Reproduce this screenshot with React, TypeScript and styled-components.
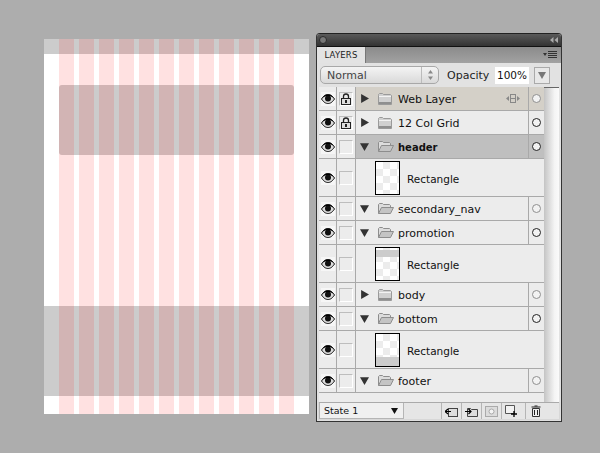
import React from 'react';
import styled, { createGlobalStyle } from 'styled-components';

const GlobalStyle = createGlobalStyle`
  html, body { margin:0; padding:0; background:#adadad; }
  * { box-sizing:border-box; }
`;

const Page = styled.div`
  width:600px;
  height:453px;
  overflow:hidden;
  background:#adadad;
  display:flex;
  align-items:flex-start;
  padding:33px 0 0 44px;
  gap:7px;
  font-family:"DejaVu Sans", "Liberation Sans", sans-serif;
`;

/* left: the document with its grid */
const Canvas = styled.div`
  position:relative;
  width:265px;
  height:375px;
  margin-top:6px;
  background:#fff;
  display:flex;
  flex-direction:column;
`;
const TopBand = styled.div`
  height:15px;
  background:#ccc;
`;
const Promo = styled.div`
  height:70px;
  margin:31px 15px 0;
  background:#ccc;
  border-radius:3px;
`;
const BottomBand = styled.div`
  height:90px;
  margin-top:151px;
  background:#ccc;
`;
const GridOverlay = styled.div`
  position:absolute;
  top:0;
  bottom:0;
  left:15px;
  right:15px;
  display:grid;
  grid-template-columns:repeat(12, 15px);
  column-gap:5px;
`;
const GridCol = styled.div`
  background:rgba(255,0,0,.118);
`;

/* right: layers panel */
const Panel = styled.div`
  width:246px;
  height:389px;
  background:#d8d8d8;
  border:1px solid #333;
  border-top-color:#222;
  border-radius:4px 4px 0 0;
  display:flex;
  flex-direction:column;
  box-shadow:inset 0 0 0 1px #e0e0e0;
`;
const TitleBar = styled.div`
  height:12px;
  flex:none;
  display:flex;
  align-items:center;
  justify-content:space-between;
  padding:0 3px 0 2px;
  background:linear-gradient(#5a5a5a, #333);
  border-radius:3px 3px 0 0;
`;
const CloseDot = styled.span`
  width:8px;
  height:8px;
  border-radius:50%;
  background:#777;
  border:1px solid #2a2a2a;
`;
const TabBar = styled.div`
  height:17px;
  flex:none;
  display:flex;
  align-items:stretch;
  justify-content:space-between;
  background:linear-gradient(#8b8b8b, #a2a2a2);
  border-top:1px solid #111;
  padding-right:4px;
`;
const Tab = styled.div`
  width:49px;
  background:#e3e3e3;
  border-right:1px solid #777;
  font-size:8.5px;
  color:#1c1c1c;
  display:flex;
  align-items:center;
  justify-content:center;
  letter-spacing:.2px;
`;
const MenuButton = styled.div`
  display:flex;
  align-items:center;
`;
const Controls = styled.div`
  height:24px;
  flex:none;
  display:flex;
  align-items:center;
  padding:0 11px 0 3px;
  background:#e2e2e2;
  font-size:11px;
  color:#222;
`;
const BlendSelect = styled.div`
  width:119px;
  height:18px;
  border:1px solid #a8a8a8;
  border-radius:5px;
  background:linear-gradient(#f4f4f4, #d9d9d9);
  display:flex;
  align-items:center;
  justify-content:space-between;
  padding-left:6px;
  color:#444;
`;
const Stepper = styled.span`
  width:17px;
  height:100%;
  border-left:1px solid #bbb;
  display:flex;
  align-items:center;
  justify-content:center;
`;
const OpacityLabel = styled.span`
  margin-left:8px;
  width:48px;
`;
const OpacityValue = styled.span`
  width:34px;
  height:17px;
  background:#fff;
  color:#111;
  font-size:10.5px;
  display:flex;
  align-items:center;
  justify-content:center;
`;
const OpacityArrow = styled.span`
  width:16px;
  height:17px;
  margin-left:5px;
  border:1px solid #aaa;
  background:#e8e8e8;
  display:flex;
  align-items:center;
  justify-content:center;
`;
const ListArea = styled.div`
  height:315px;
  flex:none;
  display:flex;
  padding-left:2px;
  background:#e2e2e2;
`;
const LayerList = styled.div`
  width:225px;
  flex:none;
  background:#ececec;
  display:flex;
  flex-direction:column;
`;
const Scrollbar = styled.div`
  flex:1;
  margin-right:2px;
  border-top:1px solid #666;
  background:linear-gradient(90deg, #c4c4c4, #f4f4f4 70%, #fafafa);
`;

const toneBg = { active: '#d4d0c8', selected: '#bfbfbf', normal: '#ececec' };

const Row = styled.div<{ $tone: keyof typeof toneBg; $tall?: boolean }>`
  height:${({ $tall }) => ($tall ? 38 : 24)}px;
  flex:none;
  display:flex;
  align-items:stretch;
  background:${({ $tone }) => toneBg[$tone]};
  border-bottom:1px solid #a9a9a9;
`;
const EyeCell = styled.div`
  width:18px;
  flex:none;
  display:flex;
  align-items:center;
  justify-content:center;
  background:#ececec;
  border-right:1px solid #a9a9a9;
`;
const LockCell = styled(EyeCell)`
  width:19px;
`;
const LockBox = styled.span`
  width:14px;
  height:14px;
  border:1px solid #bdbdbd;
  border-right-color:#fff;
  border-bottom-color:#fff;
  background:#ececec;
  display:flex;
  align-items:center;
  justify-content:center;
`;
const EyeBox = styled.span`
  width:14px;
  height:14px;
  background:#f6f6f6;
  display:flex;
  align-items:center;
  justify-content:center;
`;
const LayerBody = styled.div<{ $indent?: boolean }>`
  flex:1;
  min-width:0;
  display:flex;
  align-items:center;
  padding-left:${({ $indent }) => ($indent ? 19 : 0)}px;
`;
const Twist = styled.span`
  width:16px;
  flex:none;
  display:flex;
  align-items:center;
  justify-content:center;
`;
const FolderSlot = styled.span`
  width:16px;
  margin-left:6px;
  margin-right:4px;
  flex:none;
  display:flex;
`;
const LayerName = styled.span<{ $bold?: boolean }>`
  font-size:${({ $bold }) => ($bold ? 10 : 11)}px;
  padding-top:2px;
  color:#111;
  font-weight:${({ $bold }) => ($bold ? 700 : 400)};
  white-space:nowrap;
`;
const ThumbName = styled.span`
  font-size:10.5px;
  padding-top:2px;
  color:#111;
  margin-left:7px;
`;
const Thumb = styled.div<{ $band?: 'top' | 'bottom' }>`
  position:relative;
  width:25px;
  height:34px;
  flex:none;
  border:1px solid #000;
  background:repeating-conic-gradient(#ececec 0 25%, #fff 0 50%) 0 0 / 14px 14px;
  &::after {
    content:${({ $band }) => ($band ? '""' : 'none')};
    position:absolute;
    left:0;
    right:0;
    ${({ $band }) => ($band === 'top' ? 'top:2px;height:7px;' : 'bottom:0;height:9px;')}
    background:#ccc;
  }
`;
const LinkSlot = styled.span`
  margin-left:auto;
  margin-right:8px;
  display:flex;
`;
const TargetCell = styled.div`
  width:16px;
  flex:none;
  border-left:1px solid #a9a9a9;
  display:flex;
  align-items:center;
  justify-content:center;
`;
const Target = styled.span<{ $on?: boolean }>`
  width:9px;
  height:9px;
  border-radius:50%;
  background:#f2f2f2;
  border:1px solid ${({ $on }) => ($on ? '#222' : '#8f8f8f')};
`;
const StatusBar = styled.div`
  height:17px;
  flex:none;
  display:flex;
  align-items:stretch;
  margin-left:2px;
  margin-right:2px;
  border-top:1px solid #aaa;
  background:#e6e6e6;
  font-size:9.5px;
  color:#111;
`;
const StateSelect = styled.div`
  width:85px;
  display:flex;
  align-items:center;
  justify-content:space-between;
  padding:0 5px 0 4px;
  background:#f0f0f0;
  border:1px solid #b5b5b5;
  border-top:none;
`;
const StatusIcon = styled.span<{ $first?: boolean; $gap?: boolean }>`
  width:20px;
  margin-left:${({ $first, $gap }) => ($first ? 37 : $gap ? 4 : 0)}px;
  border-left:1px solid #b5b5b5;
  display:flex;
  align-items:center;
  justify-content:center;
`;

const Tri = ({ dir, color = '#333', size = 9 }: { dir: 'right' | 'down' | 'up'; color?: string; size?: number }) => {
  const pts = dir === 'right' ? '1,0 8,4 1,8' : dir === 'down' ? '0,1 8,1 4,8' : '0,7 8,7 4,0';
  return (
    <svg width={size} height={size} viewBox="0 0 8 8"><polygon points={pts} fill={color} /></svg>
  );
};

const Eye = () => (
  <svg width="14" height="10" viewBox="0 0 14 10">
    <path d="M.5 5C3 1.2 5 .5 7 .5s4 .7 6.5 4.5C11 8.700 9 9.500 7 9.500S3 8.700.5 5z" fill="#ddd" stroke="#111" strokeWidth="1" />
    <circle cx="7" cy="4.500" r="3" fill="#111" />
    <path d="M1 4.500C3 1 5 .6 7 .6s4 .4 6 3.900C11 2.600 9 2 7 2S3 2.600 1 4.500z" fill="#000" />
  </svg>
);

const Lock = () => (
  <svg width="10" height="12" viewBox="0 0 10 12">
    <path d="M2.500 5.500V3.500a2.500 2.500 0 0 1 5 0v2" fill="none" stroke="#222" strokeWidth="1.300" />
    <rect x=".5" y="5.500" width="9" height="6" fill="#ddd" stroke="#222" />
    <rect x="4" y="7" width="2" height="3" fill="#222" />
  </svg>
);

const FolderClosed = () => (
  <svg width="14" height="12" viewBox="0 0 14 12">
    <path d="M.5 2.500V1.500l1-1h3l1 1h7l1 1v9H.5z" fill="#d0d0d0" stroke="#9a9a9a" />
    <rect x="1" y="9" width="12" height="2" fill="#8f8f8f" />
    <rect x="1" y="3" width="12" height="1" fill="#f2f2f2" />
  </svg>
);

const FolderOpen = () => (
  <svg width="16" height="11" viewBox="0 0 16 11">
    <path d="M.5 10.500V1.500l1-1h3l1 1h6l1 1v2" fill="#dcdcdc" stroke="#8d8d8d" />
    <path d="M.5 10.500l3-6h12l-3 6z" fill="#c4c4c4" stroke="#8d8d8d" />
  </svg>
);

const LinkIcon = () => (
  <svg width="14" height="9" viewBox="0 0 14 9">
    <polygon points="0,4.500 3,2 3,7" fill="#888" />
    <polygon points="14,4.500 11,2 11,7" fill="#888" />
    <rect x="4.500" y=".5" width="5" height="8" fill="none" stroke="#888" />
    <line x1="4.500" y1="4.500" x2="9.500" y2="4.500" stroke="#888" />
  </svg>
);

const MenuGlyph = () => (
  <svg width="14" height="8" viewBox="0 0 14 8">
    <polygon points="0,2 4,2 2,5" fill="#333" />
    <path d="M5 .5h9M5 2.500h9M5 4.500h9M5 6.500h9" stroke="#333" strokeWidth="1" />
  </svg>
);

const CollapseGlyph = () => (
  <svg width="8" height="6" viewBox="0 0 8 6">
    <polygon points="3.500,0 0,3 3.500,6" fill="#aaa" />
    <polygon points="8,0 4.500,3 8,6" fill="#aaa" />
  </svg>
);

const LinkBtn = () => (
  <svg width="13" height="11" viewBox="0 0 13 11">
    <rect x="3.500" y="2.500" width="9" height="8" fill="#ddd" stroke="#444" />
    <path d="M0 5.500h6M3 3l-3 2.500L3 8" fill="none" stroke="#000" strokeWidth="1.200" />
  </svg>
);
const GroupBtn = () => (
  <svg width="13" height="11" viewBox="0 0 13 11">
    <path d="M2.500 10.500V2.500h3l1 1h6v7z" fill="#ddd" stroke="#444" />
    <path d="M0 5.500h6M3.500 3l2.500 2.500L3.500 8" fill="none" stroke="#000" strokeWidth="1.200" />
  </svg>
);
const MaskBtn = () => (
  <svg width="13" height="11" viewBox="0 0 13 11">
    <rect x=".5" y=".5" width="12" height="10" fill="#dcdcdc" stroke="#aaa" />
    <circle cx="6.500" cy="5.500" r="2.500" fill="#f4f4f4" stroke="#aaa" />
  </svg>
);
const NewBtn = () => (
  <svg width="13" height="12" viewBox="0 0 13 12">
    <path d="M.5.5h9v8h-9z" fill="#f2f2f2" stroke="#555" />
    <path d="M9 6v6M6 9h6" stroke="#000" strokeWidth="1.300" />
  </svg>
);
const TrashBtn = () => (
  <svg width="10" height="12" viewBox="0 0 10 12">
    <path d="M1.500 3.500h7v8h-7z" fill="#eee" stroke="#333" />
    <path d="M.5 2h9M3.500 1h3M3.500 5v5M6.500 5v5" stroke="#222" strokeWidth="1" />
  </svg>
);

type Layer = {
  name: string;
  kind: 'group' | 'thumb';
  open?: boolean;
  locked?: boolean;
  on?: boolean;
  bold?: boolean;
  tone?: keyof typeof toneBg;
  link?: boolean;
  band?: 'top' | 'bottom';
};

const layers: Layer[] = [
  { name: 'Web Layer', kind: 'group', locked: true, tone: 'active', link: true },
  { name: '12 Col Grid', kind: 'group', locked: true, on: true },
  { name: 'header', kind: 'group', open: true, on: true, bold: true, tone: 'selected' },
  { name: 'Rectangle', kind: 'thumb' },
  { name: 'secondary_nav', kind: 'group', open: true },
  { name: 'promotion', kind: 'group', open: true, on: true },
  { name: 'Rectangle', kind: 'thumb', band: 'top' },
  { name: 'body', kind: 'group' },
  { name: 'bottom', kind: 'group', open: true, on: true },
  { name: 'Rectangle', kind: 'thumb', band: 'bottom' },
  { name: 'footer', kind: 'group', open: true },
];

const App = () => {
  return (
    <Page>
      <GlobalStyle />
      <Canvas>
        <TopBand />
        <Promo />
        <BottomBand />
        <GridOverlay>
          {Array.from({ length: 12 }, (_, i) => <GridCol key={i} />)}
        </GridOverlay>
      </Canvas>
      <Panel>
        <TitleBar>
          <CloseDot />
          <CollapseGlyph />
        </TitleBar>
        <TabBar>
          <Tab>LAYERS</Tab>
          <MenuButton><MenuGlyph /></MenuButton>
        </TabBar>
        <Controls>
          <BlendSelect>
            Normal
            <Stepper>
              <svg width="7" height="12" viewBox="0 0 7 12">
                <polygon points="3.500,1 6,4.500 1,4.500" fill="#888" />
                <polygon points="3.500,11 6,7.500 1,7.500" fill="#888" />
              </svg>
            </Stepper>
          </BlendSelect>
          <OpacityLabel>Opacity</OpacityLabel>
          <OpacityValue>100%</OpacityValue>
          <OpacityArrow><Tri dir="down" color="#777" size={8} /></OpacityArrow>
        </Controls>
        <ListArea>
          <LayerList>
            {layers.map((l, i) => (
              <Row key={i} $tone={l.tone || 'normal'} $tall={l.kind === 'thumb'}>
                <EyeCell><EyeBox><Eye /></EyeBox></EyeCell>
                <LockCell><LockBox>{l.locked && <Lock />}</LockBox></LockCell>
                {l.kind === 'thumb' ? (
                  <LayerBody $indent>
                    <Thumb $band={l.band} />
                    <ThumbName>{l.name}</ThumbName>
                  </LayerBody>
                ) : (
                  <>
                    <LayerBody>
                      <Twist><Tri dir={l.open ? 'down' : 'right'} /></Twist>
                      <FolderSlot>{l.open ? <FolderOpen /> : <FolderClosed />}</FolderSlot>
                      <LayerName $bold={l.bold}>{l.name}</LayerName>
                      {l.link && <LinkSlot><LinkIcon /></LinkSlot>}
                    </LayerBody>
                    <TargetCell><Target $on={l.on} /></TargetCell>
                  </>
                )}
              </Row>
            ))}
          </LayerList>
          <Scrollbar />
        </ListArea>
        <StatusBar>
          <StateSelect>
            State 1
            <Tri dir="down" color="#111" size={7} />
          </StateSelect>
          <StatusIcon $first><LinkBtn /></StatusIcon>
          <StatusIcon><GroupBtn /></StatusIcon>
          <StatusIcon><MaskBtn /></StatusIcon>
          <StatusIcon><NewBtn /></StatusIcon>
          <StatusIcon $gap><TrashBtn /></StatusIcon>
        </StatusBar>
      </Panel>
    </Page>
  );
};

export default App;
